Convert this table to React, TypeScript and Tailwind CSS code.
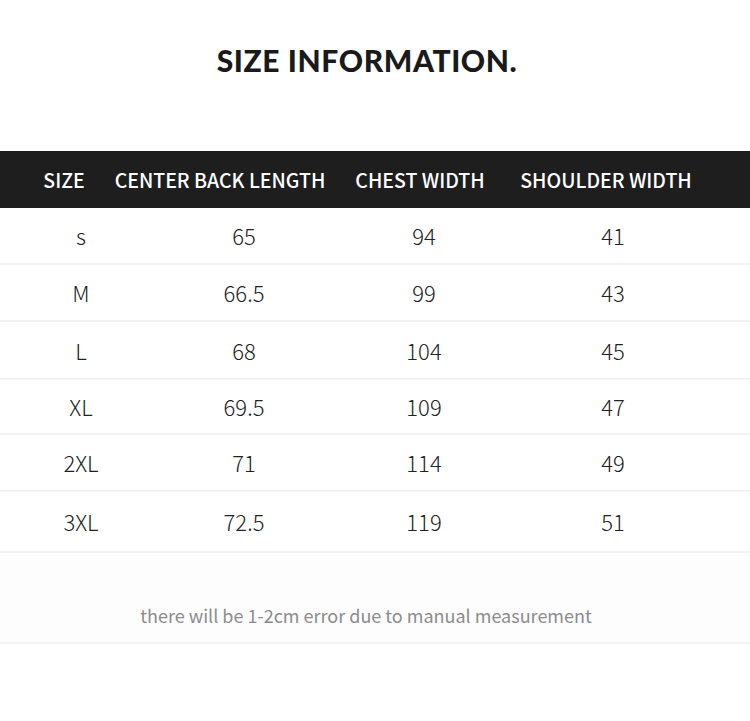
import React from "react";

const rows: { s: string; a: string; b: string; c: string; h: string }[] = [
  { s: "s", a: "65", b: "94", c: "41", h: "h-[57px]" },
  { s: "M", a: "66.5", b: "99", c: "43", h: "h-[57px]" },
  { s: "L", a: "68", b: "104", c: "45", h: "h-[58px]" },
  { s: "XL", a: "69.5", b: "109", c: "47", h: "h-[55px]" },
  { s: "2XL", a: "71", b: "114", c: "49", h: "h-[57px]" },
  { s: "3XL", a: "72.5", b: "119", c: "51", h: "h-[61px]" },
];

function Cell({ w, children }: { w: string; children: React.ReactNode }) {
  return (
    <div className={`${w} flex justify-center`}>
      <span className="whitespace-nowrap">{children}</span>
    </div>
  );
}

export default function App() {
  return (
    <div className="w-[750px] h-[721px] bg-white overflow-hidden" style={{ fontFamily: '"Noto Sans CJK SC", "Noto Sans", sans-serif' }}>
      <div className="h-[151px] flex justify-center pt-[40px] pr-[16px]">
        <h1
          className="text-[30px] font-black text-[#1a1a1a] leading-[40px] tracking-[0.6px]"
          style={{ fontFamily: '"Lato", "Noto Sans", sans-serif' }}
        >
          SIZE INFORMATION.
        </h1>
      </div>
      <div className="h-[57px] bg-[#1e1e1e] flex items-center text-white text-[19.5px] font-medium">
        <Cell w="w-[128px]">SIZE</Cell>
        <Cell w="w-[184px]">CENTER BACK LENGTH</Cell>
        <Cell w="w-[216px]">CHEST WIDTH</Cell>
        <Cell w="w-[156px]">SHOULDER WIDTH</Cell>
      </div>
      {rows.map((r, i) => (
        <div key={i} className={`${r.h} flex items-center border-b-2 border-[#f2f2f2] text-[22px] font-light text-[#222]`}>
          <Cell w="w-[162px]">{r.s}</Cell>
          <Cell w="w-[164px]">{r.a}</Cell>
          <Cell w="w-[196px]">{r.b}</Cell>
          <Cell w="w-[182px]">{r.c}</Cell>
        </div>
      ))}
      <div className="h-[91px] bg-[#fdfdfd] border-b-2 border-[#f2f2f2] flex items-end justify-center pb-[12px] pr-[18px]">
        <p className="text-[18px] font-normal text-[#8c8c8c] leading-[30px]">
          there will be 1-2cm error due to manual measurement
        </p>
      </div>
    </div>
  );
}
